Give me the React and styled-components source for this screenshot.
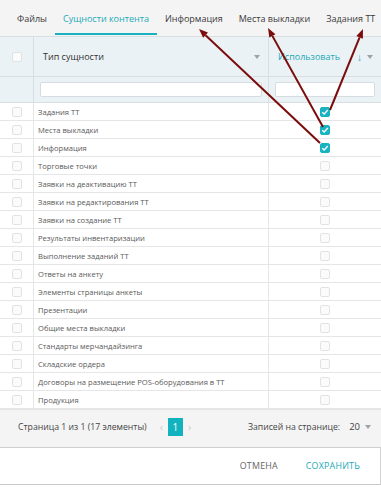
import React from 'react';
import styled, { createGlobalStyle } from 'styled-components';

const GlobalStyle = createGlobalStyle`
  body {
    margin: 0;
    background: #ffffff;
    font-family: "Open Sans", "Noto Sans", sans-serif;
  }
`;

const Page = styled.div`
  position: relative;
  width: 381px;
  height: 487px;
  overflow: hidden;
  background: #fff;
`;

const TabBar = styled.div`
  display: flex;
  height: 37px;
  padding-left: 9px;
  background: #f4f4f4;
  border-bottom: 1px solid #d9dee1;
  box-sizing: border-box;
`;

const Tab = styled.div`
  display: flex;
  align-items: center;
  padding: 3px 8px 0;
  font-size: 9px;
  color: ${p => (p.$active ? '#1ba9b8' : '#3a3a3a')};
  border-bottom: 2px solid ${p => (p.$active ? '#19b2c0' : 'transparent')};
  margin-bottom: 1px;
  white-space: nowrap;
`;

const Grid = styled.div`
  display: grid;
  grid-template-columns: 34px 235px 1fr;
`;

const Cell = styled.div`
  display: flex;
  align-items: center;
  justify-content: ${p => p.$center ? 'center' : 'flex-start'};
  height: ${p => p.$h || 18}px;
  box-sizing: border-box;
  padding: ${p => p.$pad || '0'};
  background: ${p => p.$bg || '#fff'};
  border-bottom: 1px solid ${p => p.$line || '#e4e6e7'};
  border-right: ${p => p.$last ? 'none' : `1px solid ${p.$line || '#e4e6e7'}`};
  font-size: 7.6px;
  color: #5a5a5a;
  white-space: nowrap;
`;

const HeadLabel = styled.span`
  flex: 1;
  font-size: 9px;
  color: ${p => p.$teal ? '#1ba9b8' : '#333'};
`;

const Caret = styled.span`
  width: 0;
  height: 0;
  border-left: 3.5px solid transparent;
  border-right: 3.5px solid transparent;
  border-top: 4px solid #9aa3a8;
`;

const SortArrow = styled.span`
  font-size: 10px;
  font-weight: bold;
  color: #1ba9b8;
  margin-right: 5px;
`;

const FilterInput = styled.div`
  width: 100%;
  height: 15px;
  background: #fff;
  border: 1px solid #d6dcdf;
  border-radius: 2px;
  box-sizing: border-box;
`;

const Box = styled.span`
  display: inline-flex;
  align-items: center;
  justify-content: center;
  width: 10px;
  height: 10px;
  box-sizing: border-box;
  border-radius: 2px;
  border: 1px solid ${p => p.$checked ? '#17b3c1' : '#e0e3e5'};
  background: ${p => p.$checked ? '#17b3c1' : '#fbfbfb'};
`;

const Pager = styled.div`
  display: flex;
  align-items: center;
  height: 39px;
  padding: 0 10px 4px 18px;
  background: #f4f4f4;
  border-top: 1px solid #e2e4e5;
  border-bottom: 1px solid #cfcfcf;
  font-size: 8.7px;
  color: #444;
  box-sizing: border-box;
`;

const Chevron = styled.span`
  color: #c4ccd1;
  font-size: 11px;
  margin: 0 ${p => p.$right ? 5 : 5}px 0 ${p => p.$right ? 5 : 13}px;
`;

const PageNum = styled.span`
  display: inline-flex;
  align-items: center;
  justify-content: center;
  width: 15px;
  height: 18px;
  background: #12b3be;
  color: #fff;
  font-size: 10px;
`;

const Spacer = styled.div`
  flex: 1;
`;

const PerPage = styled.span`
  margin-left: 9px;
  margin-right: 5px;
  font-size: 9.5px;
`;

const Footer = styled.div`
  display: flex;
  justify-content: flex-end;
  align-items: center;
  gap: 28px;
  height: 37px;
  padding: 0 20px 2px 0;
  border-bottom: 1px solid #c9c9c9;
  border-right: 1px solid #d2d2d2;
  box-sizing: border-box;
`;

const Action = styled.span`
  font-size: 8.9px;
  letter-spacing: 0.2px;
  color: ${p => p.$primary ? '#1ba9b8' : '#666'};
`;

const Overlay = styled.svg`
  position: absolute;
  left: 0;
  top: 0;
  pointer-events: none;
`;

const Check = () => (
  <svg width="8" height="8" viewBox="0 0 8 8">
    <path d="M1.2 4.2 L3.2 6 L6.8 2" fill="none" stroke="#fff" strokeWidth="1.4" />
  </svg>
);

const rows = [
  ['Задания ТТ', true],
  ['Места выкладки', true],
  ['Информация', true],
  ['Торговые точки'],
  ['Заявки на деактивацию ТТ'],
  ['Заявки на редактирования ТТ'],
  ['Заявки на создание ТТ'],
  ['Результаты инвентаризации'],
  ['Выполнение заданий ТТ'],
  ['Ответы на анкету'],
  ['Элементы страницы анкеты'],
  ['Презентации'],
  ['Общие места выкладки'],
  ['Стандарты мерчандайзинга'],
  ['Складские ордера'],
  ['Договоры на размещение POS-оборудования в ТТ'],
  ['Продукция'],
];

const arrows = [
  { x1: 320, y1: 143, x2: 199, y2: 29 },
  { x1: 323, y1: 127, x2: 268, y2: 28 },
  { x1: 330, y1: 110, x2: 363, y2: 29 },
];

const Arrow = ({ x1, y1, x2, y2 }) => {
  const a = Math.atan2(y2 - y1, x2 - x1);
  const len = 9;
  const w = 3.5;
  const bx = x2 - len * Math.cos(a);
  const by = y2 - len * Math.sin(a);
  const px = -Math.sin(a) * w;
  const py = Math.cos(a) * w;
  return (
    <g>
      <line x1={x1} y1={y1} x2={bx} y2={by} stroke="#7b0c0c" strokeWidth="2" />
      <polygon points={`${x2},${y2} ${bx + px},${by + py} ${bx - px},${by - py}`} fill="#7b0c0c" />
    </g>
  );
};

const HEAD_BG = '#ebf2f5';
const HEAD_LINE = '#d7dfe3';

export default function App() {
  return (
    <Page>
      <GlobalStyle />
      <TabBar>
        <Tab>Файлы</Tab>
        <Tab $active>Сущности контента</Tab>
        <Tab>Информация</Tab>
        <Tab>Места выкладки</Tab>
        <Tab>Задания ТТ</Tab>
      </TabBar>

      <Grid>
        <Cell $h={40} $bg={HEAD_BG} $line={HEAD_LINE} $center>
          <Box />
        </Cell>
        <Cell $h={40} $bg={HEAD_BG} $line={HEAD_LINE} $pad="0 8px 0 9px">
          <HeadLabel>Тип сущности</HeadLabel>
          <Caret />
        </Cell>
        <Cell $h={40} $bg={HEAD_BG} $line={HEAD_LINE} $pad="0 8px 0 9px" $last>
          <HeadLabel $teal>Использовать</HeadLabel>
          <SortArrow>↓</SortArrow>
          <Caret />
        </Cell>

        <Cell $h={26} $bg={HEAD_BG} $line={HEAD_LINE} />
        <Cell $h={26} $bg={HEAD_BG} $line={HEAD_LINE} $pad="0 6px 0 6px">
          <FilterInput />
        </Cell>
        <Cell $h={26} $bg={HEAD_BG} $line={HEAD_LINE} $pad="0 6px 0 6px" $last>
          <FilterInput />
        </Cell>

        {rows.map(([name, checked]) => (
          <React.Fragment key={name}>
            <Cell $center>
              <Box />
            </Cell>
            <Cell $pad="0 0 0 4px">{name}</Cell>
            <Cell $center $last>
              <Box $checked={checked}>{checked && <Check />}</Box>
            </Cell>
          </React.Fragment>
        ))}
      </Grid>

      <Pager>
        <span>Страница 1 из 1 (17 элементы)</span>
        <Chevron>‹</Chevron>
        <PageNum>1</PageNum>
        <Chevron $right>›</Chevron>
        <Spacer />
        <span>Записей на странице:</span>
        <PerPage>20</PerPage>
        <Caret />
      </Pager>

      <Footer>
        <Action>ОТМЕНА</Action>
        <Action $primary>СОХРАНИТЬ</Action>
      </Footer>

      <Overlay width="381" height="487">
        {arrows.map((a, i) => (
          <Arrow key={i} {...a} />
        ))}
      </Overlay>
    </Page>
  );
}
